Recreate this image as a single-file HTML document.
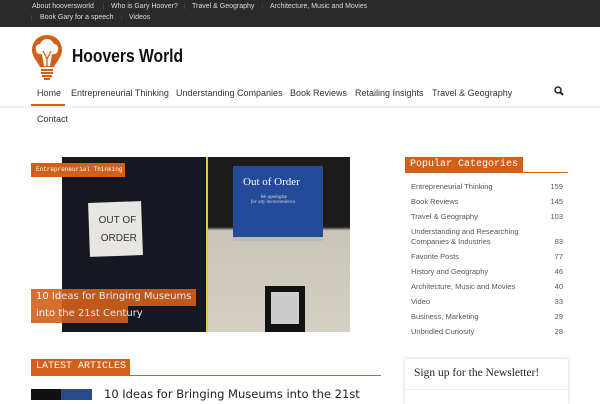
<!DOCTYPE html>
<html><head><meta charset="utf-8"><style>
*{margin:0;padding:0;box-sizing:border-box}
body{width:600px;height:400px;overflow:hidden;background:#fff;font-family:"Liberation Sans",sans-serif;position:relative;color:#222}
.a{position:absolute;white-space:nowrap}
.top{position:absolute;left:0;top:0;width:600px;height:27px;background:#2a2a2a}
.top span{position:absolute;font-size:7px;color:#ddd}
.sep{color:#666!important;font-size:5px!important;margin-top:1px}
.nav{font-size:9px;color:#333;top:88px}
.or{background:#d2601a;color:#fff}
.cat{font-size:7.5px;color:#555}
.cnt{font-size:7.5px;color:#555;text-align:right;width:30px}
</style></head><body>
<div class="top">
<span style="left:32px;top:3px">About hooversworld</span>
<span class="sep" style="left:103px;top:3px">|</span>
<span style="left:111px;top:3px">Who is Gary Hoover?</span>
<span class="sep" style="left:184px;top:3px">|</span>
<span style="left:192px;top:3px">Travel &amp; Geography</span>
<span class="sep" style="left:262px;top:3px">|</span>
<span style="left:270px;top:3px">Architecture, Music and Movies</span>
<span class="sep" style="left:31px;top:14px">|</span>
<span style="left:40px;top:14px">Book Gary for a speech</span>
<span class="sep" style="left:121px;top:14px">|</span>
<span style="left:129px;top:14px">Videos</span>
</div>
<svg class="a" style="left:30px;top:33px" width="34" height="50" viewBox="0 0 34 50">
<path d="M17 2C8 2 2 9 2 17c0 7 5 11 8 17h14c3-6 8-10 8-17C32 9 26 2 17 2z" fill="#d2601a"/>
<path d="M17 6c-4 0-6 3-7 5-3 0-5 3-4 6 0 3 3 5 6 4l2 12h6l2-12c3 1 6-1 6-4 1-3-1-6-4-6-1-2-3-5-7-5z" fill="#fff"/>
<path d="M13 18l4 8 4-8M17 26v7" stroke="#d2601a" stroke-width="1.3" fill="none"/>
<rect x="11" y="36" width="12" height="2" fill="#d2601a"/><rect x="11" y="39" width="12" height="2" fill="#d2601a"/><rect x="12" y="42" width="10" height="2" fill="#d2601a"/><rect x="14" y="45" width="6" height="2" fill="#d2601a"/>
</svg>
<div class="a" style="left:72px;top:46px;font-size:18px;font-weight:bold;color:#111;transform:scaleX(0.87);transform-origin:0 0">Hoovers World</div>
<div class="a nav" style="left:37px">Home</div>
<div class="a" style="left:31px;top:104px;width:34px;height:2px;background:#d2601a"></div>
<div class="a nav" style="left:71px">Entrepreneurial Thinking</div>
<div class="a nav" style="left:176px">Understanding Companies</div>
<div class="a nav" style="left:290px">Book Reviews</div>
<div class="a nav" style="left:355px">Retailing Insights</div>
<div class="a nav" style="left:432px">Travel &amp; Geography</div>
<svg class="a" style="left:554px;top:86px" width="10" height="10"><circle cx="4" cy="4" r="3" stroke="#222" stroke-width="1.5" fill="none"/><path d="M6 6l3 3" stroke="#222" stroke-width="2"/></svg>
<div class="a" style="left:0;top:106px;width:600px;height:3px;background:linear-gradient(#e8e8e8,#fff)"></div>
<div class="a nav" style="left:37px;top:114px">Contact</div>

<div class="a" style="left:62px;top:157px;width:144px;height:175px;background:#151820"></div>
<div class="a" style="left:89px;top:202px;width:53px;height:54px;background:#e8e6e2;transform:rotate(-2deg)"></div>
<div class="a" style="left:98px;top:212px;font-size:10px;color:#333;text-align:center;line-height:18px">OUT OF<br>&nbsp;ORDER</div>
<div class="a" style="left:206px;top:157px;width:2px;height:175px;background:#e8c838"></div>
<div class="a" style="left:208px;top:157px;width:142px;height:175px;background:linear-gradient(#1c1c1c 0,#1c1c1c 40%,#c9c5b8 42%,#d4d0c4 100%)"></div>
<div class="a" style="left:233px;top:166px;width:90px;height:75px;background:#244a9a;border-bottom:4px solid #bbb"></div>
<div class="a" style="left:243px;top:176px;font-family:'Liberation Serif',serif;font-size:11px;color:#fff">Out of Order</div>
<div class="a" style="left:251px;top:195px;font-family:'Liberation Serif',serif;font-size:5px;color:#ddd;font-style:italic;text-align:center">We apologize<br>for any inconvenience.</div>
<div class="a" style="left:265px;top:286px;width:40px;height:46px;background:#111"></div>
<div class="a" style="left:271px;top:292px;width:28px;height:32px;background:#ccc"></div>
<div class="a or" style="left:31px;top:163px;width:94px;height:14px;font-family:'Liberation Mono',monospace;font-size:6px;padding:3px 5px">Entrepreneurial Thinking</div>
<div class="a or" style="left:31px;top:289px;width:165px;height:17px;font-family:'DejaVu Sans',sans-serif;font-size:10px;padding:2px 5px;opacity:.9">10 Ideas for Bringing Museums</div>
<div class="a or" style="left:31px;top:306px;width:97px;height:17px;font-family:'DejaVu Sans',sans-serif;font-size:10px;padding:2px 5px;opacity:.9">into the 21st Century</div>

<div class="a or" style="left:405px;top:157px;width:118px;height:16px;font-family:'Liberation Mono',monospace;font-size:10px;padding:2px 5px">Popular Categories</div>
<div class="a" style="left:405px;top:172px;width:163px;height:1px;background:#d2601a"></div>
<div class="a cat" style="left:411px;top:182px">Entrepreneurial Thinking</div><div class="a cnt" style="left:533px;top:182px">159</div>
<div class="a cat" style="left:411px;top:197px">Book Reviews</div><div class="a cnt" style="left:533px;top:197px">145</div>
<div class="a cat" style="left:411px;top:212px">Travel &amp; Geography</div><div class="a cnt" style="left:533px;top:212px">103</div>
<div class="a cat" style="left:411px;top:227px">Understanding and Researching</div>
<div class="a cat" style="left:411px;top:237px">Companies &amp; Industries</div><div class="a cnt" style="left:533px;top:237px">83</div>
<div class="a cat" style="left:411px;top:252px">Favorite Posts</div><div class="a cnt" style="left:533px;top:252px">77</div>
<div class="a cat" style="left:411px;top:267px">History and Geography</div><div class="a cnt" style="left:533px;top:267px">46</div>
<div class="a cat" style="left:411px;top:282px">Architecture, Music and Movies</div><div class="a cnt" style="left:533px;top:282px">40</div>
<div class="a cat" style="left:411px;top:297px">Video</div><div class="a cnt" style="left:533px;top:297px">33</div>
<div class="a cat" style="left:411px;top:312px">Business, Marketing</div><div class="a cnt" style="left:533px;top:312px">29</div>
<div class="a cat" style="left:411px;top:327px">Unbridled Curiosity</div><div class="a cnt" style="left:533px;top:327px">28</div>

<div class="a or" style="left:31px;top:359px;width:99px;height:16px;font-family:'Liberation Mono',monospace;font-size:10px;padding:2px 5px">LATEST ARTICLES</div>
<div class="a" style="left:31px;top:375px;width:350px;height:1px;background:#d2601a"></div>
<div class="a" style="left:31px;top:389px;width:30px;height:11px;background:#111"></div>
<div class="a" style="left:61px;top:389px;width:31px;height:11px;background:#2a4a8a"></div>
<div class="a" style="left:104px;top:387px;font-family:'DejaVu Sans',sans-serif;font-size:11.5px;color:#222">10 Ideas for Bringing Museums into the 21st</div>
<div class="a" style="left:405px;top:359px;width:163px;height:45px;background:#fff;box-shadow:0 0 4px rgba(0,0,0,.2)"></div>
<div class="a" style="left:405px;top:389px;width:163px;height:1px;background:#eee"></div>
<div class="a" style="left:414px;top:367px;font-family:'Liberation Serif',serif;font-size:11.5px;color:#222">Sign up for the Newsletter!</div>
</body></html>
